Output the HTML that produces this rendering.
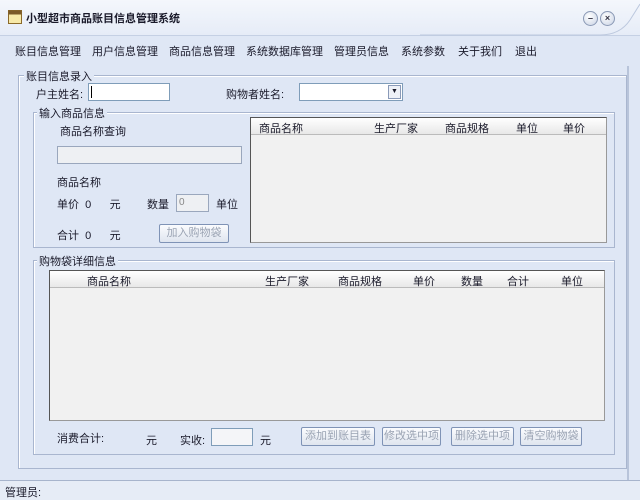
<!DOCTYPE html>
<html><head><meta charset="utf-8"><style>
*{margin:0;padding:0;box-sizing:border-box}
body{width:640px;height:500px;overflow:hidden;background:#dfe7f5;font-family:"Liberation Sans","Noto Sans CJK SC","WenQuanYi Zen Hei",sans-serif;font-size:11px;color:#1a1a2a;position:relative}
.a{position:absolute;white-space:nowrap}
.title{left:0;top:0;width:640px;height:36px;background:linear-gradient(#f4f7fc,#e6ecf7);border-bottom:1px solid #c5d0e4}
.gb{position:absolute;border:1px solid #a9b6cf;box-shadow:1px 1px 0 #fff inset}
.lg{position:absolute;background:#dfe7f5;padding:0 2px;font-size:11px}
.tb{position:absolute;background:#f1f1f1;border:1px solid #555;border-right-color:#999;border-bottom-color:#999}
.hd{position:absolute;left:0;right:0;top:0;height:17px;background:linear-gradient(#fff,#e8e8e8);border-bottom:1px solid #bbb}
.btn{position:absolute;height:19px;border:1px solid #7f93b6;border-radius:2px;background:linear-gradient(#fbfcfe,#dfe5ef);color:#9aa3b3;text-align:center;line-height:17px;font-size:11px}
.inp{position:absolute;background:#fff;border:1px solid #7f9db9}
.dis{position:absolute;background:#eef0f3;border:1px solid #9aa7bd}
.circ{position:absolute;width:15px;height:15px;border-radius:50%;border:1px solid #8a99b5;background:radial-gradient(circle at 40% 35%,#fff,#c8d2e4);font-size:9px;text-align:center;line-height:13px;color:#334;font-weight:bold}
</style></head><body>
<div class="a title"></div>
<svg class="a" style="left:8px;top:10px" width="14" height="14"><rect x="0.5" y="0.5" width="13" height="13" fill="#f7e9a8" stroke="#8b6a2a"/><rect x="0.5" y="0.5" width="13" height="4" fill="#7b5a28"/></svg>
<div class="a" style="left:26px;top:10px;font-size:11px;font-weight:bold">小型超市商品账目信息管理系统</div>
<svg class="a" style="left:420px;top:0" width="220" height="36"><path d="M0 35 L180 35 Q200 35 210 20 L220 4" fill="none" stroke="#bcc8de"/></svg>
<div class="circ" style="left:583px;top:11px">–</div>
<div class="circ" style="left:600px;top:11px">×</div>
<div class="a" style="left:15px;top:43px">账目信息管理</div>
<div class="a" style="left:92px;top:43px">用户信息管理</div>
<div class="a" style="left:169px;top:43px">商品信息管理</div>
<div class="a" style="left:246px;top:43px">系统数据库管理</div>
<div class="a" style="left:334px;top:43px">管理员信息</div>
<div class="a" style="left:401px;top:43px">系统参数</div>
<div class="a" style="left:458px;top:43px">关于我们</div>
<div class="a" style="left:515px;top:43px">退出</div>
<div class="a" style="left:627px;top:66px;width:2px;height:414px;background:#b8c4da"></div>

<div class="gb" style="left:18px;top:75px;width:609px;height:394px"></div>
<div class="lg" style="left:24px;top:68px">账目信息录入</div>
<div class="a" style="left:36px;top:86px">户主姓名:</div>
<div class="inp" style="left:88px;top:83px;width:82px;height:18px"><div style="position:absolute;left:2px;top:2px;width:1px;height:12px;background:#000"></div></div>
<div class="a" style="left:226px;top:86px">购物者姓名:</div>
<div class="inp" style="left:299px;top:83px;width:104px;height:18px"><div style="position:absolute;right:1px;top:1px;width:13px;height:14px;border:1px solid #8a9ab8;background:#eef1f7;font-size:7px;text-align:center;line-height:12px">▼</div></div>

<div class="gb" style="left:33px;top:112px;width:582px;height:136px"></div>
<div class="lg" style="left:37px;top:105px">输入商品信息</div>
<div class="a" style="left:60px;top:123px">商品名称查询</div>
<div class="dis" style="left:57px;top:146px;width:185px;height:18px"></div>
<div class="a" style="left:57px;top:174px">商品名称</div>
<div class="a" style="left:57px;top:196px">单价 &nbsp;0 &nbsp;&nbsp;&nbsp;&nbsp;&nbsp;元</div>
<div class="a" style="left:147px;top:196px">数量</div>
<div class="dis" style="left:176px;top:194px;width:33px;height:18px;color:#888;font-size:10px;padding-left:2px;line-height:15px">0</div>
<div class="a" style="left:216px;top:196px">单位</div>
<div class="a" style="left:57px;top:227px">合计 &nbsp;0 &nbsp;&nbsp;&nbsp;&nbsp;&nbsp;元</div>
<div class="btn" style="left:159px;top:224px;width:70px">加入购物袋</div>
<div class="tb" style="left:250px;top:117px;width:357px;height:126px"><div class="hd"></div>
<div class="a" style="left:8px;top:2px">商品名称</div><div class="a" style="left:123px;top:2px">生产厂家</div><div class="a" style="left:194px;top:2px">商品规格</div><div class="a" style="left:265px;top:2px">单位</div><div class="a" style="left:312px;top:2px">单价</div></div>

<div class="gb" style="left:33px;top:260px;width:582px;height:195px"></div>
<div class="lg" style="left:37px;top:253px">购物袋详细信息</div>
<div class="tb" style="left:49px;top:270px;width:556px;height:151px"><div class="hd"></div>
<div class="a" style="left:37px;top:2px">商品名称</div><div class="a" style="left:215px;top:2px">生产厂家</div><div class="a" style="left:288px;top:2px">商品规格</div><div class="a" style="left:363px;top:2px">单价</div><div class="a" style="left:411px;top:2px">数量</div><div class="a" style="left:457px;top:2px">合计</div><div class="a" style="left:511px;top:2px">单位</div></div>
<div class="a" style="left:57px;top:430px">消费合计:</div>
<div class="a" style="left:146px;top:432px">元</div>
<div class="a" style="left:180px;top:432px">实收:</div>
<div class="inp" style="left:211px;top:428px;width:42px;height:18px;background:#f4f5f8"></div>
<div class="a" style="left:260px;top:432px">元</div>
<div class="btn" style="left:301px;top:427px;width:74px">添加到账目表</div>
<div class="btn" style="left:382px;top:427px;width:59px">修改选中项</div>
<div class="btn" style="left:451px;top:427px;width:63px">删除选中项</div>
<div class="btn" style="left:520px;top:427px;width:62px">清空购物袋</div>

<div class="a" style="left:0;top:480px;width:640px;height:20px;border-top:1px solid #a7b4cc;background:#e6ecf6"></div>
<div class="a" style="left:5px;top:484px">管理员:</div>
</body></html>
